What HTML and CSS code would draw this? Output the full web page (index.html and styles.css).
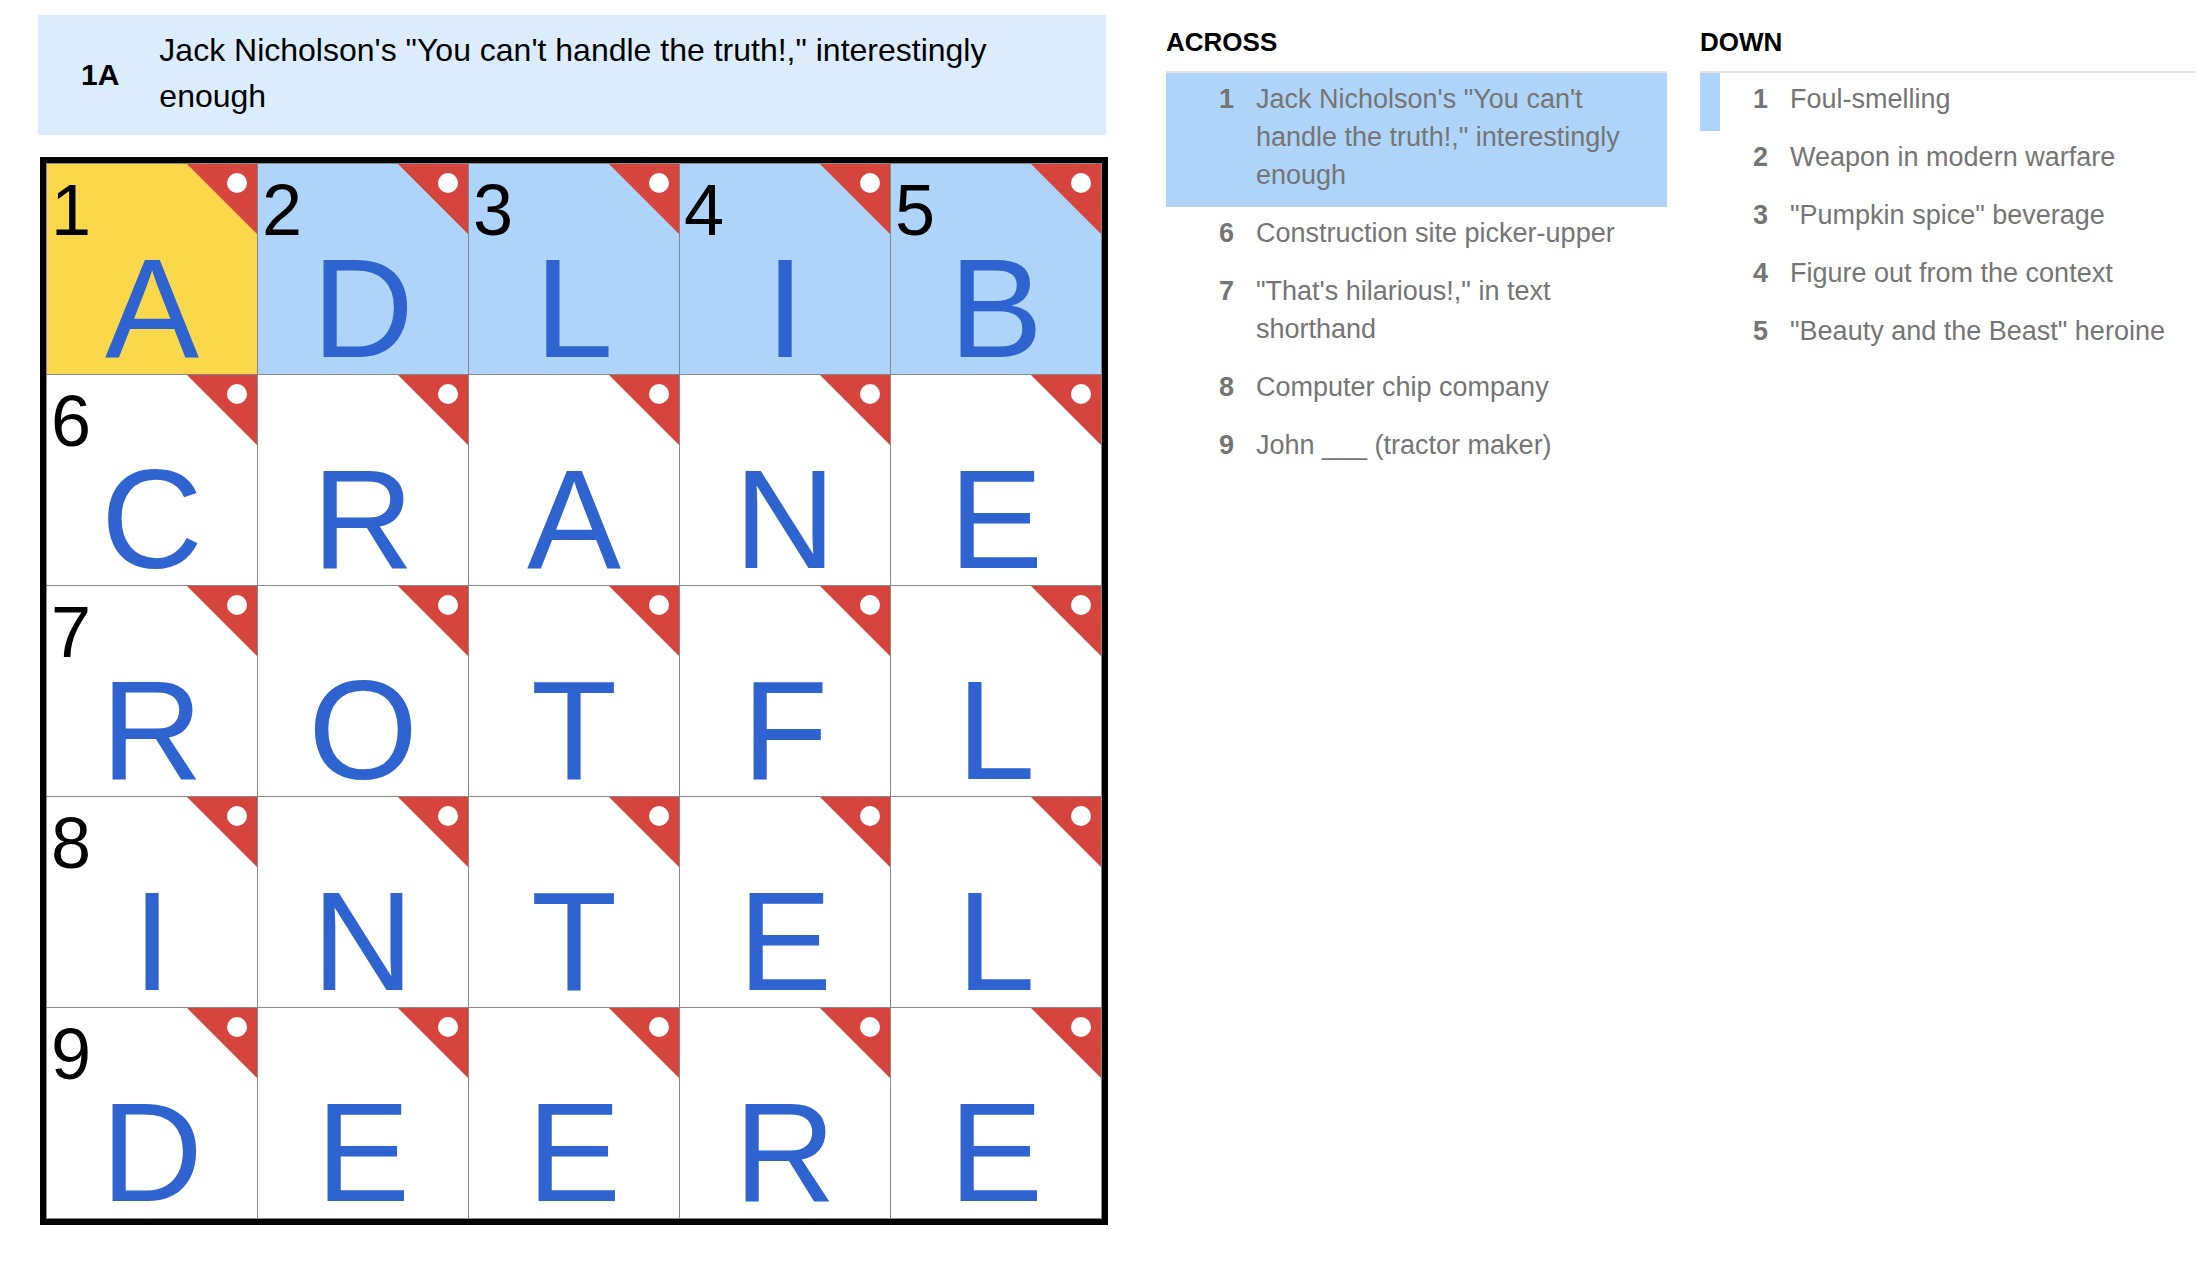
FILE: index.html
```html
<!DOCTYPE html>
<html lang="en">
<head>
<meta charset="utf-8">
<title>Mini Crossword</title>
<link rel="stylesheet" href="styles.css">
</head>
<body>
<div class="page">
  <section class="board">
    <div class="clue-bar">
      <span class="clue-bar-label">1A</span>
      <span class="clue-bar-text">Jack Nicholson's "You can't handle the truth!," interestingly enough</span>
    </div>
    <div class="grid">
      <div class="cell current"><span class="num">1</span><span class="letter">A</span><svg class="flag" viewBox="0 0 70 70"><polygon points="0,0 70,0 70,70"/><circle cx="50" cy="19" r="10"/></svg></div>
      <div class="cell word"><span class="num">2</span><span class="letter">D</span><svg class="flag" viewBox="0 0 70 70"><polygon points="0,0 70,0 70,70"/><circle cx="50" cy="19" r="10"/></svg></div>
      <div class="cell word"><span class="num">3</span><span class="letter">L</span><svg class="flag" viewBox="0 0 70 70"><polygon points="0,0 70,0 70,70"/><circle cx="50" cy="19" r="10"/></svg></div>
      <div class="cell word"><span class="num">4</span><span class="letter">I</span><svg class="flag" viewBox="0 0 70 70"><polygon points="0,0 70,0 70,70"/><circle cx="50" cy="19" r="10"/></svg></div>
      <div class="cell word"><span class="num">5</span><span class="letter">B</span><svg class="flag" viewBox="0 0 70 70"><polygon points="0,0 70,0 70,70"/><circle cx="50" cy="19" r="10"/></svg></div>

      <div class="cell"><span class="num">6</span><span class="letter">C</span><svg class="flag" viewBox="0 0 70 70"><polygon points="0,0 70,0 70,70"/><circle cx="50" cy="19" r="10"/></svg></div>
      <div class="cell"><span class="letter">R</span><svg class="flag" viewBox="0 0 70 70"><polygon points="0,0 70,0 70,70"/><circle cx="50" cy="19" r="10"/></svg></div>
      <div class="cell"><span class="letter">A</span><svg class="flag" viewBox="0 0 70 70"><polygon points="0,0 70,0 70,70"/><circle cx="50" cy="19" r="10"/></svg></div>
      <div class="cell"><span class="letter">N</span><svg class="flag" viewBox="0 0 70 70"><polygon points="0,0 70,0 70,70"/><circle cx="50" cy="19" r="10"/></svg></div>
      <div class="cell"><span class="letter">E</span><svg class="flag" viewBox="0 0 70 70"><polygon points="0,0 70,0 70,70"/><circle cx="50" cy="19" r="10"/></svg></div>

      <div class="cell"><span class="num">7</span><span class="letter">R</span><svg class="flag" viewBox="0 0 70 70"><polygon points="0,0 70,0 70,70"/><circle cx="50" cy="19" r="10"/></svg></div>
      <div class="cell"><span class="letter">O</span><svg class="flag" viewBox="0 0 70 70"><polygon points="0,0 70,0 70,70"/><circle cx="50" cy="19" r="10"/></svg></div>
      <div class="cell"><span class="letter">T</span><svg class="flag" viewBox="0 0 70 70"><polygon points="0,0 70,0 70,70"/><circle cx="50" cy="19" r="10"/></svg></div>
      <div class="cell"><span class="letter">F</span><svg class="flag" viewBox="0 0 70 70"><polygon points="0,0 70,0 70,70"/><circle cx="50" cy="19" r="10"/></svg></div>
      <div class="cell"><span class="letter">L</span><svg class="flag" viewBox="0 0 70 70"><polygon points="0,0 70,0 70,70"/><circle cx="50" cy="19" r="10"/></svg></div>

      <div class="cell"><span class="num">8</span><span class="letter">I</span><svg class="flag" viewBox="0 0 70 70"><polygon points="0,0 70,0 70,70"/><circle cx="50" cy="19" r="10"/></svg></div>
      <div class="cell"><span class="letter">N</span><svg class="flag" viewBox="0 0 70 70"><polygon points="0,0 70,0 70,70"/><circle cx="50" cy="19" r="10"/></svg></div>
      <div class="cell"><span class="letter">T</span><svg class="flag" viewBox="0 0 70 70"><polygon points="0,0 70,0 70,70"/><circle cx="50" cy="19" r="10"/></svg></div>
      <div class="cell"><span class="letter">E</span><svg class="flag" viewBox="0 0 70 70"><polygon points="0,0 70,0 70,70"/><circle cx="50" cy="19" r="10"/></svg></div>
      <div class="cell"><span class="letter">L</span><svg class="flag" viewBox="0 0 70 70"><polygon points="0,0 70,0 70,70"/><circle cx="50" cy="19" r="10"/></svg></div>

      <div class="cell"><span class="num">9</span><span class="letter">D</span><svg class="flag" viewBox="0 0 70 70"><polygon points="0,0 70,0 70,70"/><circle cx="50" cy="19" r="10"/></svg></div>
      <div class="cell"><span class="letter">E</span><svg class="flag" viewBox="0 0 70 70"><polygon points="0,0 70,0 70,70"/><circle cx="50" cy="19" r="10"/></svg></div>
      <div class="cell"><span class="letter">E</span><svg class="flag" viewBox="0 0 70 70"><polygon points="0,0 70,0 70,70"/><circle cx="50" cy="19" r="10"/></svg></div>
      <div class="cell"><span class="letter">R</span><svg class="flag" viewBox="0 0 70 70"><polygon points="0,0 70,0 70,70"/><circle cx="50" cy="19" r="10"/></svg></div>
      <div class="cell"><span class="letter">E</span><svg class="flag" viewBox="0 0 70 70"><polygon points="0,0 70,0 70,70"/><circle cx="50" cy="19" r="10"/></svg></div>
    </div>
  </section>

  <section class="clues across">
    <h2 class="clues-title">ACROSS</h2>
    <ol class="clue-list">
      <li class="clue active"><span class="clue-num">1</span><span class="clue-text">Jack Nicholson's "You can't handle the truth!," interestingly enough</span></li>
      <li class="clue"><span class="clue-num">6</span><span class="clue-text">Construction site picker-upper</span></li>
      <li class="clue"><span class="clue-num">7</span><span class="clue-text">"That's hilarious!," in text shorthand</span></li>
      <li class="clue"><span class="clue-num">8</span><span class="clue-text">Computer chip company</span></li>
      <li class="clue"><span class="clue-num">9</span><span class="clue-text">John ___ (tractor maker)</span></li>
    </ol>
  </section>

  <section class="clues down">
    <h2 class="clues-title">DOWN</h2>
    <ol class="clue-list">
      <li class="clue related"><span class="clue-num">1</span><span class="clue-text">Foul-smelling</span></li>
      <li class="clue"><span class="clue-num">2</span><span class="clue-text">Weapon in modern warfare</span></li>
      <li class="clue"><span class="clue-num">3</span><span class="clue-text">"Pumpkin spice" beverage</span></li>
      <li class="clue"><span class="clue-num">4</span><span class="clue-text">Figure out from the context</span></li>
      <li class="clue"><span class="clue-num">5</span><span class="clue-text">"Beauty and the Beast" heroine</span></li>
    </ol>
  </section>
</div>
</body>
</html>
```

FILE: styles.css
```css
* {
  box-sizing: border-box;
}

html, body {
  margin: 0;
  padding: 0;
  background: #ffffff;
}

body {
  font-family: "Liberation Sans", Arial, sans-serif;
  color: #000;
  overflow: hidden;
}

.page {
  display: flex;
  align-items: flex-start;
  width: 2196px;
  height: 1262px;
  padding-left: 38px;
}

/* ---------- board ---------- */
.board {
  width: 1070px;
  flex: 0 0 1070px;
  padding-top: 15px;
}

.clue-bar {
  display: flex;
  align-items: center;
  gap: 40px;
  width: 1068px;
  height: 120px;
  padding: 0 40px 0 43px;
  background: #dcecfc;
}

.clue-bar-label {
  font-size: 30px;
  font-weight: bold;
  flex: 0 0 auto;
}

.clue-bar-text {
  font-size: 32px;
  line-height: 46px;
  margin-top: -4px;
}

.grid {
  margin-top: 22px;
  margin-left: 2px;
  display: grid;
  grid-template-columns: repeat(5, 210px);
  grid-template-rows: repeat(5, 210px);
  gap: 1px;
  padding: 1px;
  border: 6px solid #000;
  background: #888888;
  width: 1068px;
}

.cell {
  position: relative;
  background: #ffffff;
  display: flex;
  justify-content: center;
  align-items: flex-end;
  padding-bottom: 1px;
}

.cell.current {
  background: #fbd84b;
}

.cell.word {
  background: #aed5f9;
}

.num {
  position: absolute;
  top: 6px;
  left: 4px;
  font-size: 72px;
  line-height: 80px;
  color: #000;
}

.letter {
  font-size: 141px;
  line-height: 158px;
  margin-bottom: -14px;
  color: #2f64d0;
}

.flag {
  position: absolute;
  top: 0;
  right: 0;
  width: 70px;
  height: 70px;
}

.flag polygon {
  fill: #d6453d;
}

.flag circle {
  fill: #ffffff;
}

/* ---------- clue lists ---------- */
.clues {
  padding-top: 27px;
}

.across {
  width: 501px;
  flex: 0 0 501px;
  margin-left: 58px;
}

.down {
  width: 496px;
  flex: 0 0 496px;
  margin-left: 33px;
}

.clues-title {
  margin: 0;
  font-size: 26px;
  line-height: 30px;
  font-weight: bold;
  padding-bottom: 14px;
  border-bottom: 2px solid #e4e4e4;
}

.clue-list {
  list-style: none;
  margin: 0;
  padding: 0;
}

.clue {
  display: flex;
  gap: 22px;
  padding: 7px 10px 13px 0;
  border-left: 20px solid transparent;
  font-size: 27px;
  line-height: 38px;
  color: #757575;
}

.clue.active {
  background: #aed5f9;
}

.clue.related {
  border-left-color: #aed5f9;
}

.clue-num {
  flex: 0 0 48px;
  text-align: right;
  font-weight: bold;
}

.clue-text {
  flex: 1 1 auto;
}
```
